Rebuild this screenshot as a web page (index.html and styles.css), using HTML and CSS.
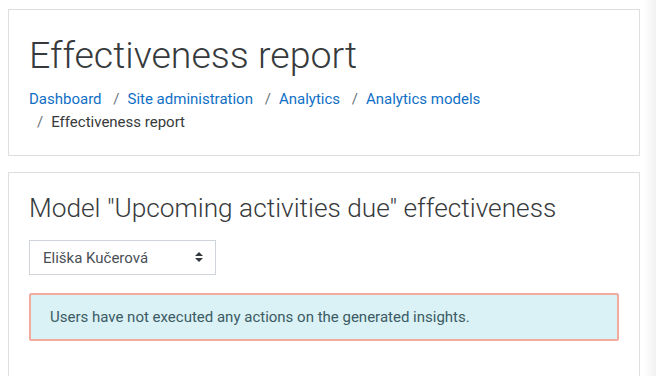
FILE: index.html
```html
<!DOCTYPE html>
<html lang="en">
<head>
    <meta charset="UTF-8">
    <meta name="viewport" content="width=device-width, initial-scale=1.0">
    <title>Effectiveness report</title>
    <link rel="stylesheet" href="styles.css">
</head>
<body>
    <div class="layout">
        <div class="page">
            <header class="card header">
                <h1>Effectiveness report</h1>
                <ol class="breadcrumb">
                    <li class="breadcrumb-item"><a href="#">Dashboard</a></li>
                    <li class="breadcrumb-item"><a href="#">Site administration</a></li>
                    <li class="breadcrumb-item"><a href="#">Analytics</a></li>
                    <li class="breadcrumb-item"><a href="#">Analytics models</a></li>
                    <li class="breadcrumb-item">Effectiveness report</li>
                </ol>
            </header>

            <section class="card">
                <h2>Model "Upcoming activities due" effectiveness</h2>
                <form class="picker">
                    <select class="custom-select" name="user">
                        <option>Eliška Kučerová</option>
                    </select>
                </form>
                <div class="alert">Users have not executed any actions on the generated insights.</div>
            </section>
        </div>
        <div class="drawer-edge"></div>
    </div>
</body>
</html>
```

FILE: styles.css
```css
* {
    box-sizing: border-box;
}
body {
    margin: 0;
    background-color: #fff;
    color: #373a3c;
    font-family: Roboto, "Liberation Sans", sans-serif;
    font-size: 15px;
    line-height: 1.5;
}
.layout {
    display: flex;
    min-height: 100vh;
}
.page {
    width: 640px;
    padding: 9px 0 0 8px;
}
.drawer-edge {
    flex: 1;
    margin-left: 4px;
    background: linear-gradient(to right, #ffffff, #f1f1f1);
}
.card {
    border: 1px solid #dedede;
    background-color: #fff;
    padding: 20px;
    margin-bottom: 16px;
}
.header {
    padding-top: 23px;
    padding-bottom: 22px;
}
h1 {
    margin: 0 0 10px;
    font-size: 37.5px;
    font-weight: 300;
    line-height: 1.2;
}
h2 {
    margin: 0 0 15px;
    font-size: 26.25px;
    font-weight: 300;
    line-height: 1.2;
}
.breadcrumb {
    list-style: none;
    margin: 0;
    padding: 0;
}
.breadcrumb-item {
    display: inline-block;
}
.breadcrumb-item + .breadcrumb-item {
    padding-left: 8px;
}
.breadcrumb-item + .breadcrumb-item::before {
    content: "/";
    padding-right: 8px;
    color: #6a737b;
}
.breadcrumb a {
    color: #0f6fc5;
    text-decoration: none;
}
.picker {
    margin-bottom: 18px;
}
.custom-select {
    width: 187px;
    height: 35px;
    padding: 6px 30px 6px 13px;
    border: 1px solid #ced4da;
    border-radius: 0;
    background: #fff url("data:image/svg+xml,%3csvg xmlns='http://www.w3.org/2000/svg' viewBox='0 0 4 5'%3e%3cpath fill='%23343a40' d='M2 0L0 2h4zm0 5L0 3h4z'/%3e%3c/svg%3e") no-repeat right 12px center / 8px 10px;
    color: #495057;
    font-family: inherit;
    font-size: 15px;
    line-height: 1.5;
    appearance: none;
    -webkit-appearance: none;
}
.alert {
    margin-bottom: 15px;
    padding: 11px 19px;
    border: 2px solid #f3ab9e;
    border-radius: 2px;
    background-color: #daf1f5;
    color: #3b5b64;
}
```
